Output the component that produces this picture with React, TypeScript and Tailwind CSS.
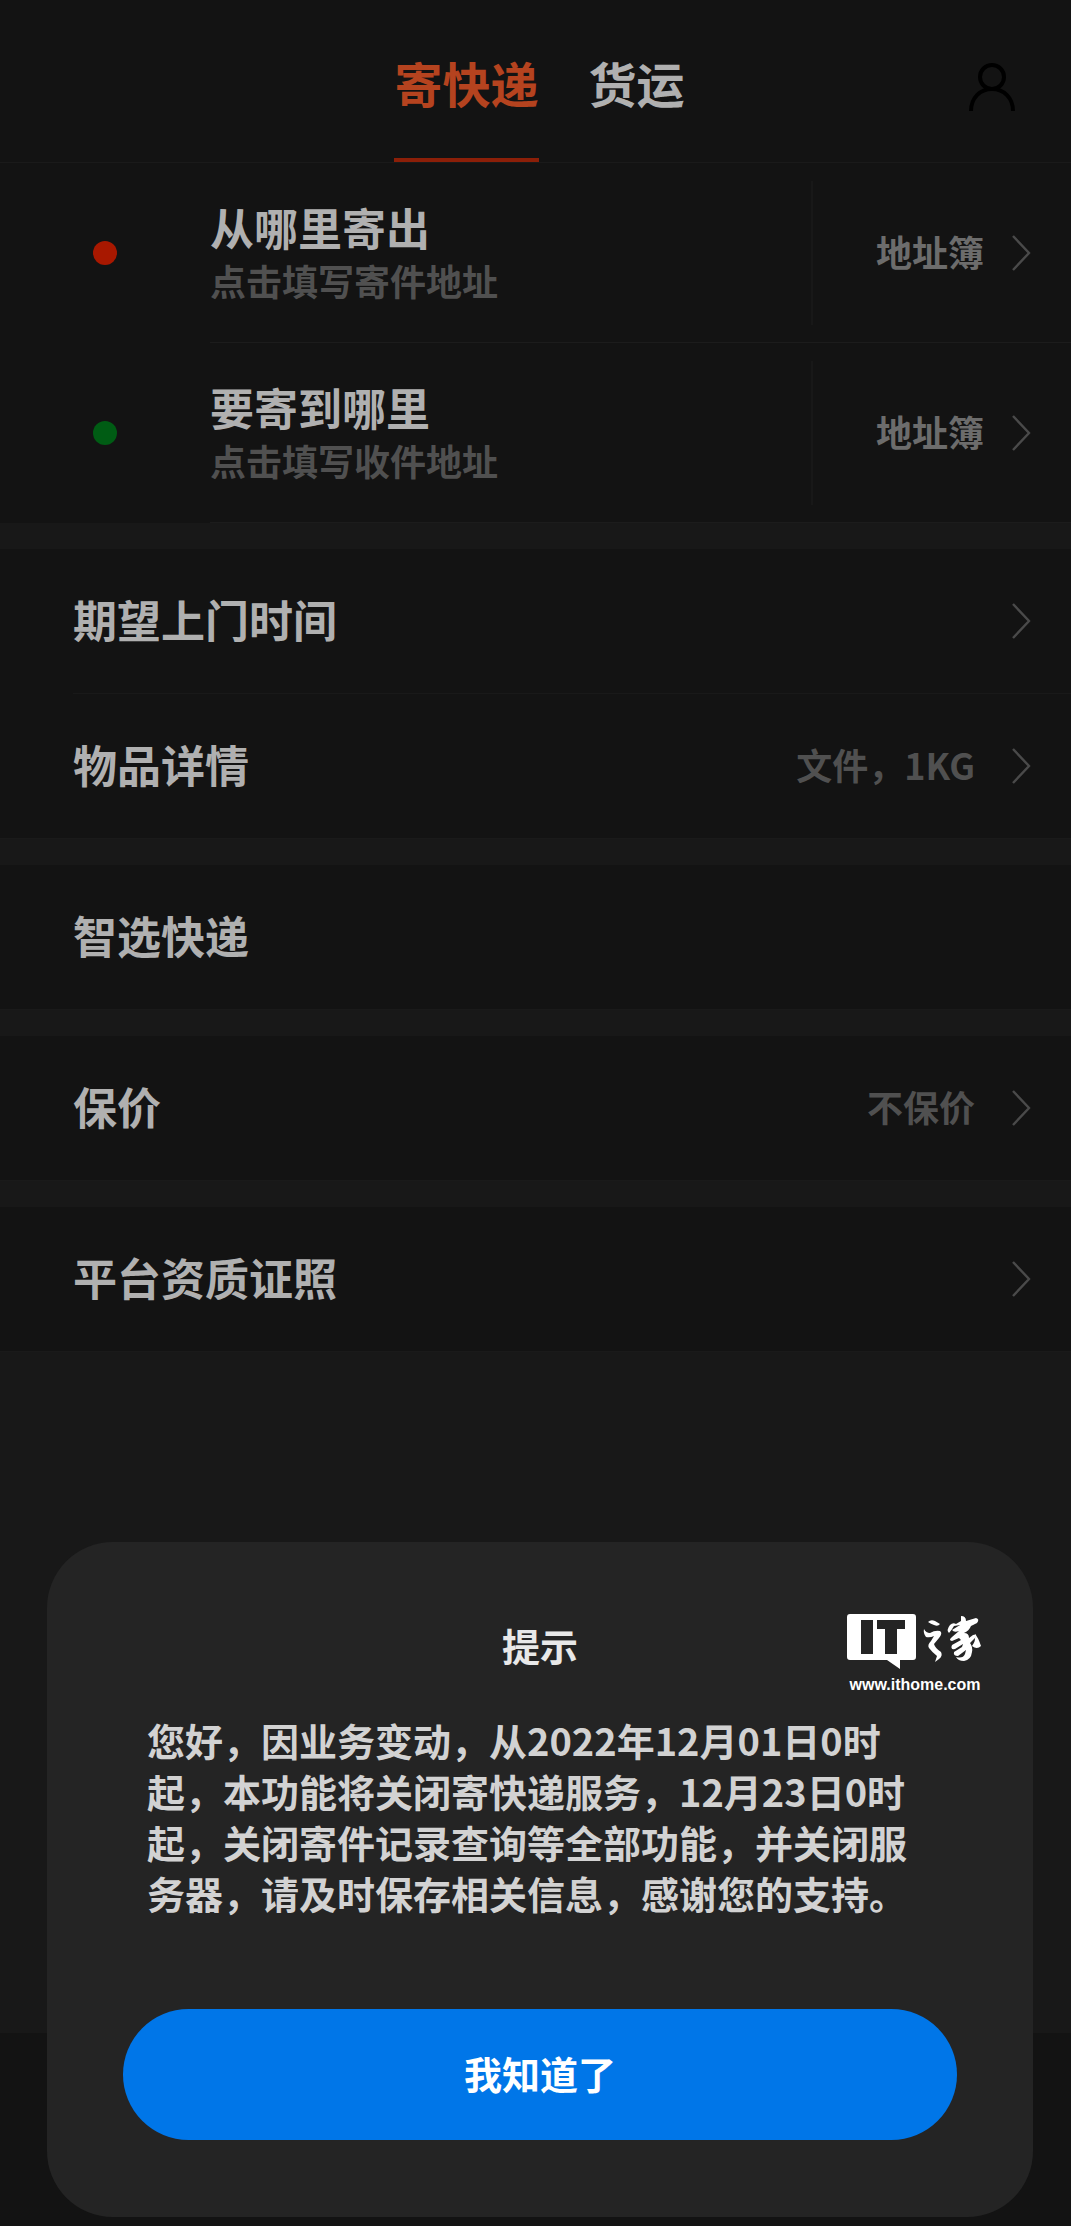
import type { ReactNode } from 'react';

const Chevron = () => (
  <svg className="w-5 h-10 shrink-0 text-[#4a4a4a]" viewBox="0 0 20 40" fill="none" stroke="currentColor" strokeWidth="2.4" aria-hidden="true">
    <path d="M2 3 L18 20 L2 37" />
  </svg>
);

const addresses = [
  { title: '从哪里寄出', hint: '点击填写寄件地址', dot: 'bg-[#a81800]' },
  { title: '要寄到哪里', hint: '点击填写收件地址', dot: 'bg-[#005c14]' },
];

const Row = ({ label, value, arrow = true }: { label: string; value?: string; arrow?: boolean }) => (
  <button type="button" className="w-full h-36 pl-[73px] pr-10 flex items-center text-left">
    <span className="pb-1 text-[44px] leading-[60px] text-[#b0b0b0]">{label}</span>
    <span className="ml-auto pb-1 text-[36px] leading-[48px] text-[#505050]">{value}</span>
    {arrow && (
      <span className="ml-9">
        <Chevron />
      </span>
    )}
  </button>
);

const Group = ({ children }: { children: ReactNode }) => (
  <section className="bg-[#131313] border-b border-[#1a1a1a]">{children}</section>
);

const Logo = () => (
  <a href="#" aria-label="IT之家" className="absolute top-[71px] right-[50px] flex flex-col items-center text-white">
    <svg className="w-[136px] h-[58px]" viewBox="0 0 136 58" fill="currentColor" aria-hidden="true">
      <path d="M3 1H66Q69 1 69 4V44Q69 47 66 47H53V56L40 47H3Q0 47 0 44V4Q0 1 3 1Z" />
      <path d="M14 7H26V41H14ZM30 7H58V16H50V41H38V16H30Z" fill="#242424" />
      <path d="M81 9Q84 6 88 8L93 11Q91 14 87 12Q84 11 81 9Z" />
      <path d="M77 16Q79 20 83 20Q88 17 93 18Q96 20 92 25L87 31Q88 35 94 39Q96 43 92 46L88 49L90 43Q85 39 82 35Q80 32 84 28L87 23Q83 25 79 24Q76 20 77 16Z" />
      <path d="M114 3Q119 3 119 8L129 5Q133 6 130 10L124 13Q122 18 117 20Q122 20 122 25L126 22Q131 20 128 25L123 30Q126 34 125 39Q124 47 117 48Q111 48 109 44Q116 46 118 41L119 37L111 43Q106 43 107 39L115 34L116 31L108 36Q103 37 105 32L114 27L112 25L105 28Q101 27 105 24L112 18Q107 20 105 17L113 12L107 13Q104 18 102 20Q99 17 103 12Q106 9 109 11L114 8Z" />
      <path d="M128 21Q131 24 134 33Q130 37 125 33Q129 28 128 21Z" />
    </svg>
    <span className="font-['Liberation_Sans',sans-serif] text-[16px] leading-[28px] font-bold">www.ithome.com</span>
  </a>
);

const App = () => {
  return (
    <div className="relative min-h-screen flex flex-col bg-[#181818] font-bold font-['Noto_Sans_CJK_SC',sans-serif]">
      {/* Header */}
      <header className="relative h-[163px] pl-2 flex justify-center bg-[#131313] border-b border-[#1a1a1a]">
        <nav className="flex gap-[50px] text-[48px] leading-[60px]">
          <a href="#express" className="h-[162px] pt-[52px] border-b-4 border-[#8c1f08] text-[#b5431f]">寄快递</a>
          <a href="#freight" className="h-[162px] pt-[52px] text-[#b0b0b0]">货运</a>
        </nav>
        <button type="button" aria-label="我的" className="absolute right-[55px] top-[60px] text-black">
          <svg className="w-12 h-[54px]" viewBox="0 0 48 54" fill="none" stroke="currentColor" strokeWidth="4" aria-hidden="true">
            <circle cx="24" cy="17" r="12" />
            <path d="M3 51C3 38 12 29 24 29S45 38 45 51" />
          </svg>
        </button>
      </header>

      <main className="flex flex-col gap-[26px]">
        {/* Sender and receiver */}
        <section className="bg-[#131313]">
          {addresses.map((item) => (
            <div key={item.title} className="flex items-stretch">
              <div className="w-[210px] flex items-center justify-center">
                <span className={`w-6 h-6 rounded-full ${item.dot}`} />
              </div>
              <div className="flex-1 h-[180px] flex items-center border-b border-[#1c1c1c]">
                <button type="button" className="flex-1 pb-1 flex flex-col items-start">
                  <span className="text-[44px] leading-[58px] text-[#b0b0b0]">{item.title}</span>
                  <span className="text-[36px] leading-[48px] text-[#505050]">{item.hint}</span>
                </button>
                <button type="button" className="w-[260px] h-36 pr-10 flex items-center justify-end gap-[27px] border-l-2 border-[#181818] text-[36px] leading-[48px] text-[#6c6c6c]">
                  <span className="pb-1">地址簿</span>
                  <Chevron />
                </button>
              </div>
            </div>
          ))}
        </section>

        <Group>
          <Row label="期望上门时间" />
          <div className="ml-[73px] h-px bg-[#191919]" />
          <Row label="物品详情" value="文件，1KG" />
        </Group>
        <Group>
          <Row label="智选快递" arrow={false} />
        </Group>
        <Group>
          <Row label="保价" value="不保价" />
        </Group>
        <Group>
          <Row label="平台资质证照" />
        </Group>
      </main>

      <footer className="mt-auto h-[193px] bg-[#131313]" />

      {/* Notice */}
      <div role="dialog" aria-labelledby="notice-title" className="fixed left-[47px] right-[38px] bottom-[9px] px-[76px] pt-[76px] pb-[77px] rounded-[66px] bg-[#242424]">
        <Logo />
        <h2 id="notice-title" className="text-center text-[38px] leading-[54px] text-[#e8e8e8]">提示</h2>
        <p className="mt-[42px] px-6 text-[38px] leading-[51px] text-[#d2d2d2]">
          您好，因业务变动，从2022年12月01日0时起，本功能将关闭寄快递服务，12月23日0时起，关闭寄件记录查询等全部功能，并关闭服务器，请及时保存相关信息，感谢您的支持。
        </p>
        <button type="button" className="mt-[91px] w-full h-[131px] pb-1 rounded-full bg-[#0076e8] text-[38px] leading-[54px] text-white">我知道了</button>
      </div>
    </div>
  );
};

export default App;
